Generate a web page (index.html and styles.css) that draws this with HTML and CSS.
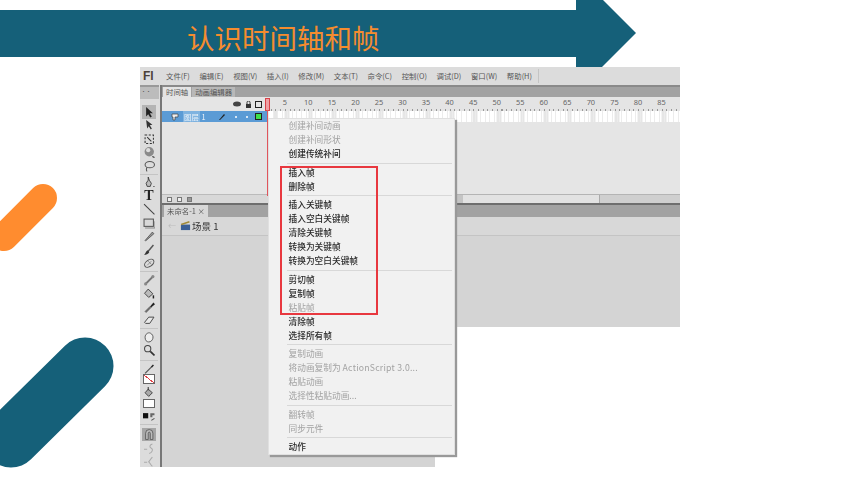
FILE: index.html
```html
<!DOCTYPE html>
<html lang="zh-CN">
<head>
  <meta charset="UTF-8">
  <title>认识时间轴和帧</title>
  <link rel="stylesheet" href="styles.css">
</head>
<body>
<div class="slide">

  <!-- 左侧装饰 -->
  <svg class="deco" width="140" height="484" viewBox="0 0 140 484">
    <line x1="4" y1="237" x2="43" y2="198" stroke="#ff8c2f" stroke-width="28" stroke-linecap="round"/>
    <line x1="11" y1="439" x2="85" y2="366" stroke="#156079" stroke-width="57" stroke-linecap="round"/>
  </svg>

  <!-- 标题箭头 -->
  <svg class="arrow" width="60" height="120" viewBox="0 0 60 120">
    <polygon points="0,0 60,60 0,120" fill="#156079"/>
  </svg>
  <div class="banner"><h1>认识时间轴和帧</h1></div>

  <!-- 软件截图 -->
  <div class="app">
    <div class="shot">
      <div class="menubar">
        <b class="logo">Fl</b>
        <nav class="menus">
          <span>文件(F)</span><span>编辑(E)</span><span>视图(V)</span><span>插入(I)</span><span>修改(M)</span><span>文本(T)</span><span>命令(C)</span><span>控制(O)</span><span>调试(D)</span><span>窗口(W)</span><span>帮助(H)</span>
        </nav>
      </div>

      <div class="work">
        <!-- 工具栏 -->
        <div class="tools">
          <div class="grip">••</div>
          <div class="tool on"><svg viewBox="0 0 12 12"><path d="M3 1l0 9 2-2 2 3 1.500-1-2-3 3 0z" fill="#222"/></svg></div>
          <div class="tool"><svg viewBox="0 0 12 12"><path d="M3 1l1 8 1.500-2 2 3 1-1-2-3 2.500-.5z" fill="#333"/></svg></div>
          <div class="tool"><svg viewBox="0 0 12 12"><rect x="2" y="2" width="8" height="8" fill="none" stroke="#333" stroke-dasharray="2 1.500"/><path d="M4 4l4 4" stroke="#333"/></svg></div>
          <div class="tool"><svg viewBox="0 0 12 12"><circle cx="6" cy="5.500" r="4.500" fill="#8a8a8a"/><circle cx="5" cy="4" r="2" fill="#ddd"/><path d="M9 10l2 1" stroke="#333"/></svg></div>
          <div class="tool"><svg viewBox="0 0 12 12"><ellipse cx="6.500" cy="4.500" rx="4.500" ry="3" fill="none" stroke="#555"/><path d="M4 7c-1 1-1 3 0 4" fill="none" stroke="#555"/></svg></div>
          <div class="sep"></div>
          <div class="tool"><svg viewBox="0 0 12 12"><path d="M5 1l0 3-2 3 1 3 3 0 1-3-2-3z" fill="#bbb" stroke="#333" stroke-width=".8"/><path d="M10 10h1" stroke="#333"/></svg></div>
          <div class="tool"><span class="glyph">T</span></div>
          <div class="tool"><svg viewBox="0 0 12 12"><path d="M1 1l10 10" stroke="#444"/></svg></div>
          <div class="tool"><svg viewBox="0 0 12 12"><rect x="1" y="2" width="9" height="7" fill="#d8d8d8" stroke="#555"/><path d="M2 10.500h9.500V4" fill="none" stroke="#888"/></svg></div>
          <div class="tool"><svg viewBox="0 0 12 12"><path d="M2 10l7-8 1.500 1.500-8 7z" fill="#999" stroke="#333" stroke-width=".6"/></svg></div>
          <div class="tool"><svg viewBox="0 0 12 12"><path d="M10 1L5 7" stroke="#555" stroke-width="1.400"/><path d="M5 6l1 2c-1 2-3 2.500-5 2.500 1.500-1 1.500-4 4-4.500z" fill="#333"/></svg></div>
          <div class="tool"><svg viewBox="0 0 12 12"><ellipse cx="6" cy="6" rx="5" ry="3" transform="rotate(-35 6 6)" fill="none" stroke="#555"/><path d="M4 8l4-4M5 4l3 3" stroke="#777" stroke-width=".7"/></svg></div>
          <div class="sep"></div>
          <div class="tool"><svg viewBox="0 0 12 12"><path d="M3 9l6-6" stroke="#777" stroke-width="2"/><circle cx="2.500" cy="9.500" r="1.500" fill="#888"/><circle cx="9.500" cy="2.500" r="1.500" fill="#888"/></svg></div>
          <div class="tool"><svg viewBox="0 0 12 12"><path d="M5 2l4.500 4.500-4 3.500L1.500 6z" fill="#bbb" stroke="#333" stroke-width=".8"/><path d="M10 8v3" stroke="#222" stroke-width="1.400"/></svg></div>
          <div class="tool"><svg viewBox="0 0 12 12"><path d="M2 10l5-5 1 1-5 5z" fill="#777" stroke="#333" stroke-width=".5"/><path d="M7 5l3-3.500 1.500 1.500L8 6z" fill="#222"/></svg></div>
          <div class="tool"><svg viewBox="0 0 12 12"><path d="M1.500 8l4-5h5l-4 6h-4z" fill="#e8e8e8" stroke="#444" stroke-width=".9"/></svg></div>
          <div class="sep"></div>
          <div class="tool"><svg viewBox="0 0 12 12"><path d="M2 6c0-3 3-5 5-4s3 3 2.500 5-2 3.500-4 3.500S2 9 2 6z" fill="#eee" stroke="#555" stroke-width=".9"/></svg></div>
          <div class="tool"><svg viewBox="0 0 12 12"><circle cx="4.500" cy="4.500" r="3" fill="#ddd" stroke="#444"/><path d="M7 7l4 4" stroke="#333" stroke-width="1.600"/></svg></div>
          <div class="sep sep-wide"></div>
          <div class="tool"><svg viewBox="0 0 12 12"><path d="M2 10l6-6" stroke="#555" stroke-width="1.200"/><path d="M8 4l2-2" stroke="#222" stroke-width="1.400"/></svg></div>
          <div class="swatch none"></div>
          <div class="tool bucket"><svg viewBox="0 0 12 12"><path d="M5 3l4 3.500-3.500 3.500L2 6.500z" fill="#aaa" stroke="#333" stroke-width=".8"/><path d="M5 1v3" stroke="#333"/></svg></div>
          <div class="swatch fill"></div>
          <div class="tool swap"><svg viewBox="0 0 12 12"><rect x="0" y="3" width="5" height="5" fill="#111"/><path d="M7 3h4v2H9v2H7z" fill="#666"/><path d="M8 10l3-2" stroke="#555"/></svg></div>
          <div class="sep"></div>
          <div class="tool snap"><svg viewBox="0 0 12 12"><path d="M2.500 11V5a3.500 3.500 0 0 1 7 0v6H7V5a1 1 0 0 0-2 0v6z" fill="#bbb" stroke="#555" stroke-width=".8"/></svg></div>
          <div class="tool"><svg viewBox="0 0 12 12"><path d="M1 7h3M9 2C6 3 6 5 8 6s1 4-2 5" fill="none" stroke="#aaa"/></svg></div>
          <div class="tool"><svg viewBox="0 0 12 12"><path d="M1 7h3M9 2C7 4 7 5 5.500 6.500 7 8 7 9 9 11" fill="none" stroke="#aaa"/></svg></div>
        </div>

        <div class="main">
          <div class="tabs">
            <span class="tab active">时间轴</span><span class="tab">动画编辑器</span>
          </div>

          <!-- 时间轴 -->
          <div class="timeline">
            <div class="layers">
              <div class="layer-head">
                <svg width="8" height="6" viewBox="0 0 8 6"><ellipse cx="4" cy="3" rx="4" ry="2.500" fill="#444"/></svg>
                <svg width="7" height="7" viewBox="0 0 7 7"><path d="M1 3h5v4H1z" fill="#333"/><path d="M2 3V1.500a1.500 1.500 0 0 1 3 0V3" fill="none" stroke="#333"/></svg>
                <i class="outline-box"></i>
              </div>
              <div class="layer-row">
                <svg class="layer-icon" width="8" height="8" viewBox="0 0 8 8"><path d="M1 1h6v3H4v3H2V4H1z" fill="#eee" stroke="#444" stroke-width=".7"/></svg>
                <span class="layer-name"><em>图层</em> 1</span>
                <svg class="pencil" width="8" height="8" viewBox="0 0 8 8"><path d="M1 7l5-6 1 1-5 5z" fill="#222"/></svg>
                <i class="dot"></i><i class="dot"></i><i class="green-box"></i>
              </div>
              <div class="layer-body"></div>
              <div class="layer-foot">
                <i class="mini"></i><i class="mini"></i><i class="mini bin"></i>
              </div>
            </div>
            <div class="frames">
              <div class="ruler">
                <span>5</span><span>10</span><span>15</span><span>20</span><span>25</span><span>30</span><span>35</span><span>40</span><span>45</span><span>50</span><span>55</span><span>60</span><span>65</span><span>70</span><span>75</span><span>80</span><span>85</span>
              </div>
              <div class="frame-row"></div>
              <div class="frame-body"></div>
              <div class="hscroll">
                <i class="hs-left"></i><i class="hs-arrow"></i><i class="hs-thumb"></i><i class="hs-rest"></i>
              </div>
              <i class="playhead"></i>
            </div>
          </div>

          <!-- 舞台 -->
          <div class="doc-tabs"><span class="doc-tab">未命名-1 ×</span></div>
          <div class="crumbs">
            <span class="back">←</span>
            <svg width="11" height="11" viewBox="0 0 12 12"><rect x="1" y="5" width="10" height="6" fill="#3a5f96"/><path d="M1 4l9-3 .6 1.600-9 3z" fill="#a08a3a"/></svg>
            <span class="scene">场景 1</span>
          </div>
          <div class="stage"></div>
        </div>
      </div>
    </div>

    <!-- 右键菜单 -->
    <div class="ctx">
      <div class="item off">创建补间动画</div>
      <div class="item off">创建补间形状</div>
      <div class="item">创建传统补间</div>
      <div class="line"></div>
      <div class="item">插入帧</div>
      <div class="item">删除帧</div>
      <div class="line"></div>
      <div class="item">插入关键帧</div>
      <div class="item">插入空白关键帧</div>
      <div class="item">清除关键帧</div>
      <div class="item">转换为关键帧</div>
      <div class="item">转换为空白关键帧</div>
      <div class="line"></div>
      <div class="item">剪切帧</div>
      <div class="item">复制帧</div>
      <div class="item off">粘贴帧</div>
      <div class="item">清除帧</div>
      <div class="item">选择所有帧</div>
      <div class="line"></div>
      <div class="item off">复制动画</div>
      <div class="item off">将动画复制为 <span class="latin">ActionScript 3.0...</span></div>
      <div class="item off">粘贴动画</div>
      <div class="item off">选择性粘贴动画...</div>
      <div class="line"></div>
      <div class="item off">翻转帧</div>
      <div class="item off">同步元件</div>
      <div class="line"></div>
      <div class="item">动作</div>
    </div>
    <div class="redbox"></div>
  </div>
</div>
</body>
</html>
```

FILE: styles.css
```css
* {
  box-sizing: border-box;
}

body {
  margin: 0;
  background: #fff;
  font-family: "Noto Sans CJK SC", "Noto Sans", sans-serif;
}

.slide {
  position: relative;
  width: 860px;
  height: 484px;
  padding-top: 10px;
  overflow: hidden;
  background: #fff;
}

.deco {
  position: absolute;
  left: 0;
  top: 0;
}

.arrow {
  position: absolute;
  left: 576px;
  top: -27px;
}

.banner {
  width: 576px;
  height: 47px;
  padding-left: 187px;
  background: #156079;
}

.banner h1 {
  margin: 0;
  font-size: 27.5px;
  font-weight: 400;
  line-height: 54px;
  color: #f58c2e;
}

.app {
  position: relative;
  width: 540px;
  height: 400px;
  margin: 10px 0 0 140px;
  color: #555;
  font-size: 7.4px;
  filter: blur(.35px);
}

/* 截图：右下角被裁掉 */
.shot {
  height: 400px;
  clip-path: polygon(0 0, 100% 0, 100% 260px, 295px 260px, 295px 100%, 0 100%);
  background: #d4d4d4;
}

.menubar {
  display: flex;
  align-items: center;
  height: 18px;
  background: #dcdcdc;
}

.logo {
  width: 26px;
  padding-left: 3px;
  font-family: "Liberation Sans", sans-serif;
  font-size: 12px;
  color: #4a4038;
}

.menus {
  display: flex;
  gap: 9.600px;
  height: 14px;
  padding-right: 6px;
  border-right: 1px solid #c4c4c4;
  line-height: 14px;
}

.work {
  display: flex;
  height: 382px;
}

.tools {
  display: flex;
  flex-direction: column;
  align-items: center;
  flex: none;
  width: 22px;
  padding-right: 2px;
  border-right: 2px solid #777;
  background: #dcdcdc;
}

.grip {
  flex: none;
  width: 20px;
  height: 20px;
  padding-left: 2px;
  border-top: 2px solid #999;
  background: linear-gradient(#bcbcbc 12px, #dcdcdc 12px);
  font-size: 5px;
  line-height: 8px;
}

.tool {
  display: flex;
  align-items: center;
  justify-content: center;
  flex: none;
  width: 14px;
  height: 13.500px;
}

.tool svg {
  width: 12.500px;
  height: 12.500px;
}

.tool.on {
  background: #b4b4b4;
}

.tool.snap {
  margin-top: 2px;
  background: #a6a6a6;
  height: 13px;
}

.tool.bucket {
  margin-top: 1px;
}

.tool.swap {
  margin-top: 2px;
}

.glyph {
  font-family: "Liberation Serif", serif;
  font-size: 14px;
  font-weight: bold;
  line-height: 13px;
  color: #222;
}

.sep {
  flex: none;
  width: 18px;
  height: 1px;
  margin: 1px 0;
  background: #c4c4c4;
}

.sep-wide {
  margin: 3px 0 1.500px;
}

.swatch {
  flex: none;
  width: 12px;
  height: 10px;
  border: 1px solid #666;
  background: #fff;
}

.swatch.none {
  margin-top: -2px;
  background: linear-gradient(to top right, #fff 46%, #e2454a 46%, #e2454a 54%, #fff 54%);
}

.swatch.fill {
  height: 9px;
}

.main {
  flex: 1;
  min-width: 0;
}

.tabs {
  display: flex;
  align-items: flex-end;
  height: 12px;
  padding-left: 1px;
  border-top: 2px solid #8a8a8a;
  background: #a2a2a2;
}

.tab {
  height: 10px;
  padding: 0 3px;
  margin-right: 1px;
  background: #b8b8b8;
  line-height: 10px;
}

.tab.active {
  background: #e4e4e4;
}

.timeline {
  display: flex;
  height: 106px;
  background: #e5e5e5;
}

.layers {
  display: flex;
  flex-direction: column;
  flex: none;
  width: 104px;
}

.layer-head {
  display: flex;
  align-items: center;
  justify-content: flex-end;
  gap: 3.500px;
  height: 14px;
  padding-right: 4px;
}

.outline-box {
  width: 7px;
  height: 7px;
  border: 1.500px solid #222;
}

.layer-row {
  display: flex;
  align-items: center;
  height: 11px;
  background: #5b9bd5;
  color: #eef4fa;
  white-space: nowrap;
}

.layer-icon {
  flex: none;
  margin-left: 9px;
}

.layer-name {
  flex: none;
  width: 35px;
  margin-left: 4px;
  line-height: 11px;
}

.layer-name em {
  padding: 0 1px;
  background: #7fb3e0;
  font-style: normal;
}

.pencil {
  flex: none;
}

.dot {
  flex: none;
  width: 2px;
  height: 2px;
  margin-left: 9px;
  border-radius: 50%;
  background: #fff;
}

.green-box {
  flex: none;
  width: 7px;
  height: 7px;
  margin-left: 7px;
  border: 1px solid #222;
  background: #3ee04a;
}

.layer-body {
  flex: 1;
}

.layer-foot {
  display: flex;
  align-items: center;
  gap: 5px;
  height: 9px;
  padding-left: 5px;
  border-top: 1px solid #bbb;
  background: #d8d8d8;
}

.mini {
  width: 5px;
  height: 5px;
  border: 1px solid #777;
  background: #eee;
}

.mini.bin {
  background: #999;
}

.frames {
  position: relative;
  display: flex;
  flex-direction: column;
  flex: 1;
  min-width: 0;
}

.ruler {
  display: flex;
  height: 14px;
  padding-left: 7px;
  background:
    repeating-linear-gradient(to right, #999 0 1px, transparent 1px 4.710px) 0 100% / 100% 2px no-repeat,
    #e4e4e4;
  line-height: 11px;
  font-family: "Noto Sans", sans-serif;
  color: #666;
}

.ruler span {
  flex: none;
  width: 23.560px;
  text-align: center;
}

.frame-row {
  height: 11px;
  background:
    repeating-linear-gradient(to right, #ececec 0 1px, transparent 1px 4.710px),
    repeating-linear-gradient(to right, #e6e6e6 0 4.710px, #fff 4.710px 23.560px) 16.500px 0,
    #fff;
  border-left: 2px solid #5b9bd5;
}

.frame-body {
  flex: 1;
}

.hscroll {
  display: flex;
  height: 9px;
  border-top: 1px solid #b4b4b4;
  background: #d8d8d8;
}

.hs-left {
  width: 189px;
}

.hs-arrow {
  width: 8px;
  background: #c4c4c4;
}

.hs-thumb {
  width: 137px;
  border-right: 1px solid #aaa;
  background: #e2e2e2;
}

.hs-rest {
  flex: 1;
  background: #cfcfcf;
}

.playhead {
  position: absolute;
  left: -1px;
  top: 1px;
  width: 5px;
  height: 13px;
  border: 1px solid #d8434a;
  background: #f0a0a4;
}

.playhead::after {
  content: "";
  position: absolute;
  left: 1px;
  top: 11px;
  width: 1px;
  height: 86px;
  background: #e0555c;
}

.doc-tabs {
  height: 14px;
  padding-left: 2px;
  border-top: 2px solid #6e6e6e;
  background: #a2a2a2;
}

.doc-tab {
  display: inline-block;
  height: 12px;
  padding: 0 3px;
  background: #d8d8d8;
  line-height: 12px;
}

.crumbs {
  display: flex;
  align-items: center;
  height: 19px;
  padding: 0 0 1px 6px;
  border-bottom: 1px solid #c4c4c4;
  background: #d8d8d8;
}

.back {
  width: 12px;
  color: #bbb;
  font-size: 8px;
}

.scene {
  margin-left: 1px;
  font-size: 9.500px;
  color: #333;
}

.stage {
  height: 232px;
  background: #d4d4d4;
}

.ctx {
  position: absolute;
  left: 128px;
  top: 51px;
  width: 187px;
  height: 337px;
  border: 1px solid #e0e0e0;
  background: #f1f1f1;
  box-shadow: 2px 2px 1px #999;
  color: #2a2a2a;
  font-size: 8.700px;
  font-weight: 500;
}

.item {
  height: 14px;
  padding-left: 19.500px;
  line-height: 14px;
}

.item.off {
  color: #a2a2a2;
  font-weight: 400;
}

.latin {
  letter-spacing: .23px;
}

.line {
  height: 1px;
  margin: 1.750px 2px 1.750px 18px;
  background: #d8d8d8;
}

.redbox {
  position: absolute;
  left: 140px;
  top: 99px;
  width: 98px;
  height: 149px;
  border: 2px solid #e8383f;
}
```
